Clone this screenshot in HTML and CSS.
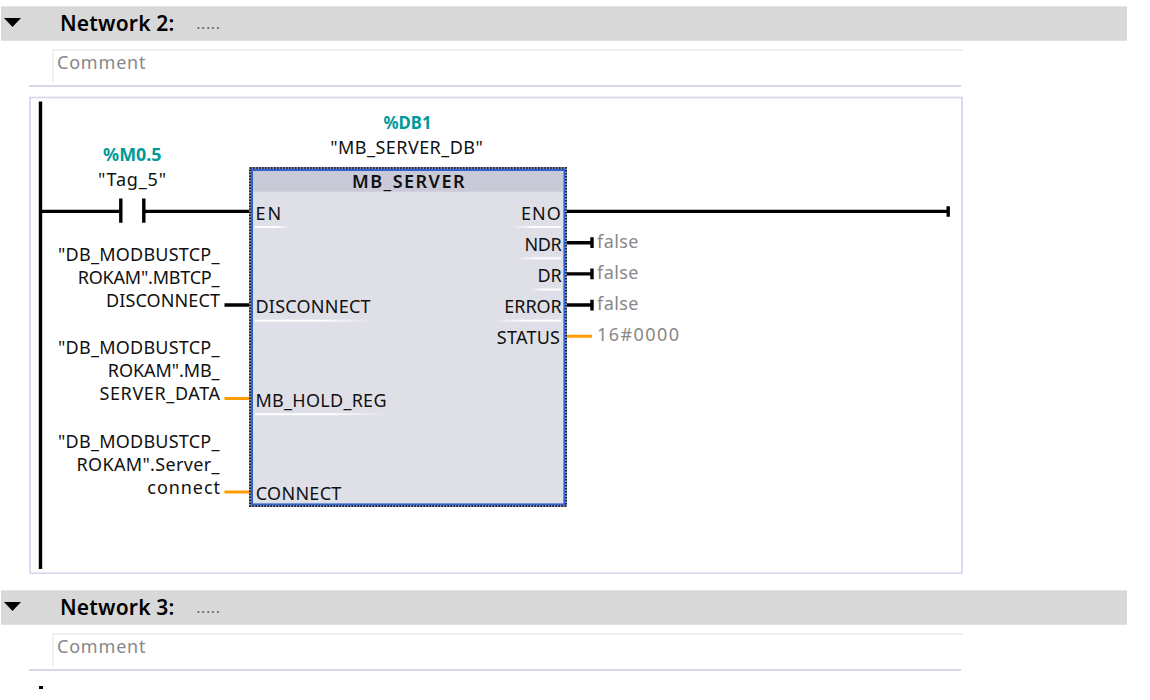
FILE: index.html
```
<!DOCTYPE html>
<html lang="en">
<head>
<meta charset="utf-8">
<title>Ladder networks</title>
<link rel="stylesheet" href="styles.css">
</head>
<body>
<main class="editor">
  <section class="network">
    <header class="network-bar">
      <svg class="toggle" viewBox="0 0 18 10"><path d="M0 0H17L8.5 9Z"/></svg>
      <h2 class="network-title">Network 2:</h2>
      <span class="network-dots">.....</span>
    </header>
    <div class="comment-row"><div class="comment">Comment</div></div>
    <div class="ladder">
      <svg class="diagram" viewBox="29 96 934 478" width="934" height="478">
        <defs>
          <linearGradient id="fade-right"><stop offset=".55" stop-color="#fff"/><stop offset="1" stop-color="#fff" stop-opacity="0"/></linearGradient>
          <linearGradient id="fade-left"><stop offset="0" stop-color="#fff" stop-opacity="0"/><stop offset=".45" stop-color="#fff"/></linearGradient>
        </defs>
        <rect class="frame" x="30" y="97.5" width="932" height="475.8"/>
        <path class="rail" d="M40.5 101.5V569"/>

        <!-- contact and power wires -->
        <path class="wire" d="M41 211.4H121M144 211.4H249M567 211.4H948"/>
        <path class="wire" d="M120.8 198.5V222.8M143.8 198.5V222.8M948.2 206.3V216.7"/>
        <path class="wire" d="M224.5 305H249M567 242.7H592M567 273.9H592M567 305H592"/>
        <path class="wire" d="M592 237.3V248M592 268.5V279.2M592 299.7V310.4"/>
        <path class="wire data" d="M224.5 398.4H249M224.5 492H249M567 336.2H592"/>

        <!-- operands -->
        <g class="address">
          <text x="103" y="161" textLength="58.5" lengthAdjust="spacingAndGlyphs">%M0.5</text>
          <text x="383.5" y="129.3" textLength="48" lengthAdjust="spacingAndGlyphs">%DB1</text>
        </g>
        <g class="label">
          <text x="98" y="185.7" textLength="68">"Tag_5"</text>
          <text x="330.3" y="154" textLength="152.5">"MB_SERVER_DB"</text>
          <text x="58" y="260.7" textLength="161.5">"DB_MODBUSTCP_</text>
          <text x="77.8" y="284" textLength="141.7">ROKAM".MBTCP_</text>
          <text x="106" y="307" textLength="114">DISCONNECT</text>
          <text x="58" y="354.2" textLength="161.5">"DB_MODBUSTCP_</text>
          <text x="107.8" y="377.4" textLength="111.7">ROKAM".MB_</text>
          <text x="99.5" y="400.4" textLength="120.5">SERVER_DATA</text>
          <text x="58" y="447.8" textLength="161.5">"DB_MODBUSTCP_</text>
          <text x="76.5" y="471" textLength="143">ROKAM".Server_</text>
          <text x="147.3" y="494" textLength="72.7">connect</text>
        </g>

        <!-- function block -->
        <rect class="block" x="252" y="170" width="312" height="334"/>
        <rect class="block-head" x="253" y="171" width="310" height="20.6"/>
        <rect class="block-outline" x="252" y="170" width="312.4" height="334.4"/>
        <rect class="selection-base" x="250" y="168" width="316" height="338"/>
        <rect class="selection" x="250" y="168" width="316" height="338"/>
        <text class="block-name" x="352" y="188.2" textLength="112.5">MB_SERVER</text>
        <g class="label">
          <text x="255.6" y="219.6" textLength="25.5">EN</text>
          <text x="255.5" y="312.9" textLength="115">DISCONNECT</text>
          <text x="255.5" y="406.7" textLength="131">MB_HOLD_REG</text>
          <text x="255.8" y="500.2" textLength="85.5">CONNECT</text>
          <text x="521" y="219.6" textLength="39.7">ENO</text>
          <text x="524.5" y="250.8" textLength="37.3">NDR</text>
          <text x="537.5" y="281.8" textLength="24.3">DR</text>
          <text x="504.3" y="313.1" textLength="57.5">ERROR</text>
          <text x="496.8" y="344.3" textLength="63.2">STATUS</text>
        </g>
        <g class="rule-left">
          <rect x="255" y="226" width="36" height="2"/>
          <rect x="255" y="319.7" width="117" height="2"/>
          <rect x="255" y="413.2" width="134" height="2"/>
        </g>
        <g class="rule-right">
          <rect x="512" y="226" width="49" height="2"/>
          <rect x="516" y="257.3" width="45" height="2"/>
          <rect x="529" y="288.5" width="32" height="2"/>
          <rect x="495" y="319.7" width="66" height="2"/>
        </g>

        <!-- output values -->
        <g class="value">
          <text x="597" y="247.6" textLength="41.5">false</text>
          <text x="597" y="278.6" textLength="41.5">false</text>
          <text x="597" y="309.8" textLength="41.5">false</text>
          <text x="597" y="341" textLength="82">16#0000</text>
        </g>
      </svg>
    </div>
  </section>
  <section class="network">
    <header class="network-bar">
      <svg class="toggle" viewBox="0 0 18 10"><path d="M0 0H17L8.5 9Z"/></svg>
      <h2 class="network-title">Network 3:</h2>
      <span class="network-dots">.....</span>
    </header>
    <div class="comment-row"><div class="comment">Comment</div></div>
    <div class="rail-start"></div>
  </section>
</main>
</body>
</html>
```
FILE: styles.css
```
* { box-sizing: border-box; }
body {
  margin: 0;
  background: #fff;
  font-family: "Noto Sans", "Open Sans", sans-serif;
  font-size: 18px;
  color: #111;
}
.editor {
  display: flex;
  flex-direction: column;
  gap: 16.3px;
  width: 1127px;
  padding: 6px 0 0 1px;
}
.network { display: flex; flex-direction: column; }
.network-bar {
  display: flex;
  align-items: center;
  flex: none;
  height: 35px;
  background: #d8d8d8;
  border-top: 1px solid #e2e2e2;
  border-bottom: 1px solid #e0e0e0;
}
.toggle { width: 18px; height: 10px; margin: 0 0 2px 3px; }
.network-title {
  margin: 0 0 0 38px;
  width: 136.5px;
  padding-bottom: 1px;
  font-size: 21px;
  font-weight: 600;
  line-height: 30px;
  letter-spacing: .2px;
  color: #000;
  white-space: nowrap;
}
.network-dots {
  font-size: 14px;
  line-height: 20px;
  letter-spacing: 1.1px;
  color: #555;
}
.comment-row {
  flex: none;
  width: 932px;
  height: 46px;
  margin-left: 28px;
  padding: 8px 0 0 23px;
  border-bottom: 2px solid #d7d7ee;
}
.comment {
  width: 911px;
  height: 33px;
  padding-left: 3px;
  border-top: 2px solid #f1f1f1;
  border-left: 2px solid #f1f1f1;
  line-height: 22px;
  letter-spacing: .8px;
  color: #888;
}
.ladder { flex: none; margin: 9px 0 0 28px; height: 478px; }
.diagram { display: block; }
.frame { fill: none; stroke: #d8d8ee; stroke-width: 1.8; }
.rail { stroke: #000; stroke-width: 3.4; }
.wire { fill: none; stroke: #000; stroke-width: 3.4; }
.data { stroke: #ff9c00; stroke-width: 3; }
.address { fill: #009a9a; font-weight: 700; }
.label { fill: #111; }
.value { fill: #888; }
.block { fill: #dfdfe8; }
.block-head { fill: #c9c9d8; }
.block-outline { fill: none; stroke: #2f62d2; stroke-width: 2; }
.selection-base { fill: none; stroke: #8790a8; stroke-width: 2; }
.selection { fill: none; stroke: #22283c; stroke-width: 2; stroke-dasharray: 1.6 1.4; }
.block-name { fill: #111; font-weight: 600; }
.rule-left { fill: url(#fade-right); }
.rule-right { fill: url(#fade-left); }
.rail-start { flex: none; width: 3.5px; height: 3px; margin: 14.5px 0 0 38px; background: #000; }
```
